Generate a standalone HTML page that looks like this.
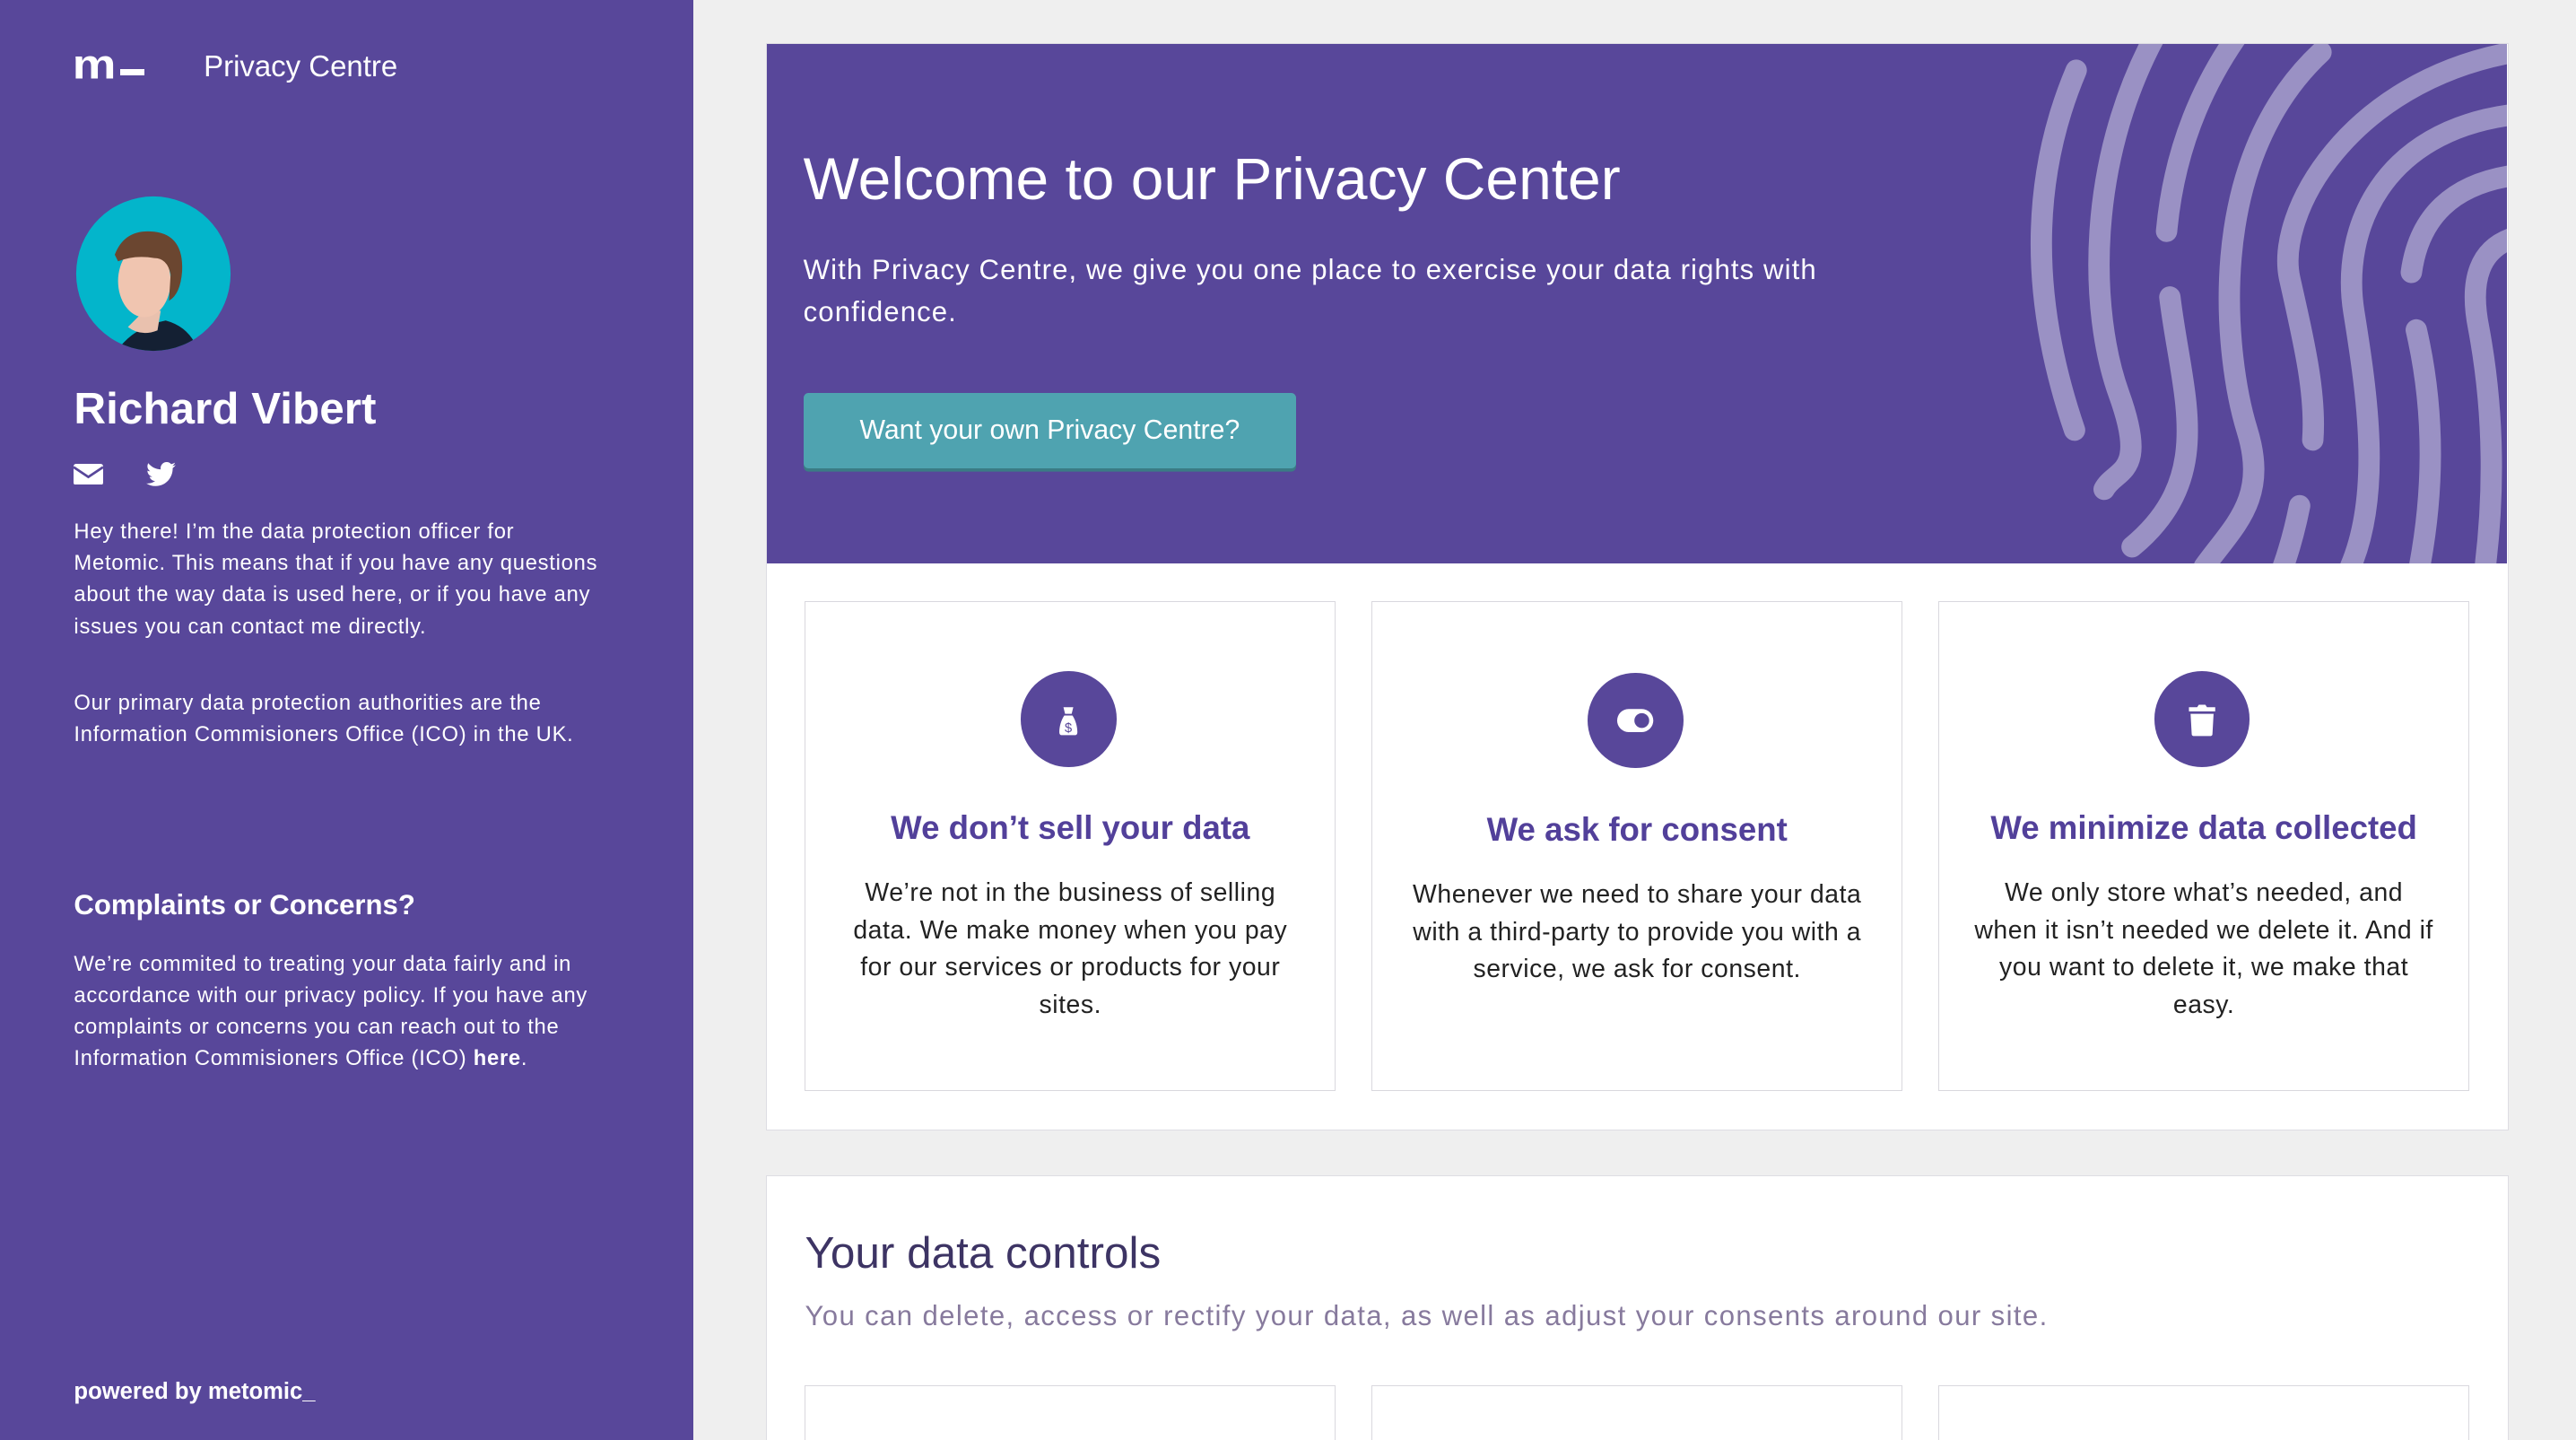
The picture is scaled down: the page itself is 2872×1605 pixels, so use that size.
<!DOCTYPE html>
<html><head><meta charset="utf-8"><style>
html{zoom:1.83163;overflow:hidden;height:876px}
*{box-sizing:border-box;margin:0;padding:0}
body{width:1568px;height:876px;overflow:hidden;background:#efefef;font-family:"Liberation Sans",sans-serif;position:relative}
#wrap{position:absolute;left:0;top:0;width:1568px;height:876px;overflow:hidden}
.abs{position:absolute;white-space:nowrap}
#side{position:absolute;left:0;top:0;width:422px;height:876px;background:#58479a;color:#fff}
.p{font-size:13px;line-height:19.2px;letter-spacing:0.4px}
.hero{position:absolute;left:467px;top:27px;width:1059px;height:316px;background:#58479a;overflow:hidden}
.wcard{position:absolute;background:#fff;border:1px solid #dedde3}
.c{position:absolute;top:366px;width:323px;height:298px;border:1px solid #d9d8de;background:#fff;text-align:center}
.c .ic{position:absolute;left:131px;top:42px;width:58px;height:58px;border-radius:50%;background:#58479a}
.c h3{position:absolute;left:0;right:0;top:126px;font-size:20px;color:#52409a;font-weight:bold}
.c p{position:absolute;left:0;right:0;top:166px;font-size:15.5px;line-height:22.6px;color:#222;letter-spacing:0.3px;white-space:nowrap}
</style></head><body><div id="wrap">
<div id="side">
 <div class="abs" style="left:44px;top:22px;font-size:30px;font-weight:bold;letter-spacing:-1px;line-height:30px;transform:scaleY(0.85);transform-origin:left bottom">m</div>
 <div class="abs" style="left:73px;top:42px;width:15px;height:4px;background:#fff"></div>
 <div class="abs" style="left:124px;top:30px;font-size:18px">Privacy Centre</div>
 <svg class="abs" style="left:46px;top:119px" width="95" height="95" viewBox="0 0 95 95">
  <defs><clipPath id="cc"><circle cx="47.5" cy="47.5" r="47"/></clipPath></defs>
  <g clip-path="url(#cc)">
  <rect width="95" height="95" fill="#03b5cb"/>
  <path d="M25 95 Q35 80 55 76 Q70 80 75 95Z" fill="#142033"/>
  <path d="M32 80 Q40 86 50 82 L52 70 L40 72Z" fill="#e9c1ae"/>
  <ellipse cx="42" cy="52" rx="16" ry="22" fill="#f0c5b0"/>
  <path d="M24 36 Q30 20 48 22 Q66 24 65 46 Q64 60 57 64 L58 48 Q56 38 48 38 Q36 36 26 40Z" fill="#6b4630"/>
  </g></svg>
 <div class="abs" style="left:45px;top:233px;font-size:27px;font-weight:bold">Richard Vibert</div>
 <svg class="abs" style="left:45px;top:282px" width="18" height="13" viewBox="0 0 18 13"><rect width="18" height="13" rx="1.5" fill="#fff"/><path d="M0 2 L9 8 L18 2" stroke="#58479a" stroke-width="1.5" fill="none"/></svg>
 <svg class="abs" style="left:89px;top:281px" width="18" height="15" viewBox="0 0 24 20"><path fill="#fff" d="M24 2.4c-.9.4-1.8.7-2.8.8 1-.6 1.800-1.6 2.2-2.7-1 .6-2 1-3.1 1.2C19.4.7 18.1 0 16.6 0c-2.7 0-4.9 2.2-4.9 4.9 0 .4 0 .8.1 1.1C7.7 5.8 4.1 3.9 1.7.9c-.4.7-.7 1.6-.7 2.5 0 1.7.9 3.2 2.2 4.1-.8 0-1.6-.2-2.2-.6v.1c0 2.4 1.7 4.4 3.9 4.8-.4.1-.8.2-1.300.2-.3 0-.6 0-.9-.1.6 2 2.4 3.4 4.6 3.4-1.7 1.3-3.8 2.1-6.1 2.100-.4 0-.8 0-1.2-.1 2.200 1.4 4.8 2.2 7.5 2.2 9.1 0 14-7.5 14-14v-.6c1-.7 1.8-1.6 2.5-2.5z"/></svg>
 <div class="abs p" style="left:45px;top:314px">Hey there! I’m the data protection officer for<br>Metomic. This means that if you have any questions<br>about the way data is used here, or if you have any<br>issues you can contact me directly.</div>
 <div class="abs p" style="left:45px;top:418px">Our primary data protection authorities are the<br>Information Commisioners Office (ICO) in the UK.</div>
 <div class="abs" style="left:45px;top:541px;font-size:17px;font-weight:bold">Complaints or Concerns?</div>
 <div class="abs p" style="left:45px;top:577px">We’re commited to treating your data fairly and in<br>accordance with our privacy policy. If you have any<br>complaints or concerns you can reach out to the<br>Information Commisioners Office (ICO) <b>here</b>.</div>
 <div class="abs" style="left:45px;top:839px;font-size:14px;font-weight:bold">powered by metomic_</div>
</div>

<div class="wcard" style="left:466px;top:26px;width:1061px;height:662px"></div>
<div class="hero">
 <svg style="position:absolute;left:0;top:0" width="1059" height="316" viewBox="467 27 1059 316">
  <g fill="none" stroke="#9a91c4" stroke-width="13" stroke-linecap="round">
   <path d="M1264 43 Q1222 142 1263 262"/>
   <path d="M1312 22 C1270 100 1272 190 1290 240 S1288 285 1281 298"/>
   <path d="M1319 141 Q1325 75 1362 22"/>
   <path d="M1321 181 C1328 240 1350 290 1298 333"/>
   <path d="M1413 32 C1340 100 1355 220 1368 262 S1360 320 1342 345"/>
   <path d="M1530 32 C1430 50 1385 130 1394 170 S1410 240 1408 268"/>
   <path d="M1400 308 Q1396 328 1390 345"/>
   <path d="M1530 70 C1450 80 1425 140 1433 190 S1450 300 1431 345"/>
   <path d="M1530 107 Q1475 115 1468 166"/>
   <path d="M1471 201 Q1487 270 1473 345"/>
   <path d="M1530 145 Q1500 155 1509 200 Q1522 270 1513 345"/>
  </g></svg>
 <div class="abs" style="left:22px;top:61px;font-size:36px;color:#fff">Welcome to our Privacy Center</div>
 <div class="abs" style="left:22px;top:125px;font-size:17px;line-height:25.5px;color:#fff;letter-spacing:0.6px">With Privacy Centre, we give you one place to exercise your data rights with<br>confidence.</div>
 <div class="abs" style="left:22px;top:212px;width:300px;height:46px;background:#4fa3b0;border-radius:3px;box-shadow:0 2px 0 #3a7c85;color:#fff;font-size:16.5px;text-align:center;line-height:46px">Want your own Privacy Centre?</div>
</div>

<div class="c" style="left:490px"><div class="ic"><svg width="58" height="58" viewBox="0 0 58 58"><path d="M26 22h6l-1 4h-4z M26.5 27h5c2 3 3 7 3 10 0 2-1 2-2 2h-7c-1 0-2 0-2-2 0-3 1-7 3-10z" fill="#fff"/><text x="29" y="37" font-size="8" text-anchor="middle" fill="#58479a" font-family="Liberation Sans">$</text></svg></div><h3>We don’t sell your data</h3><p>We’re not in the business of selling<br>data. We make money when you pay<br>for our services or products for your<br>sites.</p></div>
<div class="c" style="left:835px"><div class="ic" style="top:43px"><svg width="58" height="58" viewBox="0 0 58 58"><rect x="18" y="22" width="22" height="14" rx="7" fill="#fff"/><circle cx="33" cy="29" r="4.5" fill="#58479a"/></svg></div><h3 style="top:127px">We ask for consent</h3><p style="top:167px">Whenever we need to share your data<br>with a third-party to provide you with a<br>service, we ask for consent.</p></div>
<div class="c" style="left:1180px"><div class="ic"><svg width="58" height="58" viewBox="0 0 58 58"><path d="M21 22h5l1-1.5h4l1 1.5h5v2.5H21z M22 26h14l-.7 12.5c0 .5-.5 1-1 1h-10.6c-.5 0-1-.5-1-1z" fill="#fff"/></svg></div><h3>We minimize data collected</h3><p>We only store what’s needed, and<br>when it isn’t needed we delete it. And if<br>you want to delete it, we make that<br>easy.</p></div>

<div class="wcard" style="left:466px;top:715px;width:1061px;height:161px;border-bottom:none"></div>
<div class="abs" style="left:490px;top:747px;font-size:27px;color:#3d3464">Your data controls</div>
<div class="abs" style="left:490px;top:791px;font-size:17px;color:#877a9d;letter-spacing:0.75px">You can delete, access or rectify your data, as well as adjust your consents around our site.</div>
<div class="c" style="left:490px;top:843px;height:33px;border-bottom:none"></div>
<div class="c" style="left:835px;top:843px;height:33px;border-bottom:none"></div>
<div class="c" style="left:1180px;top:843px;height:33px;border-bottom:none"></div>
</div></body></html>
